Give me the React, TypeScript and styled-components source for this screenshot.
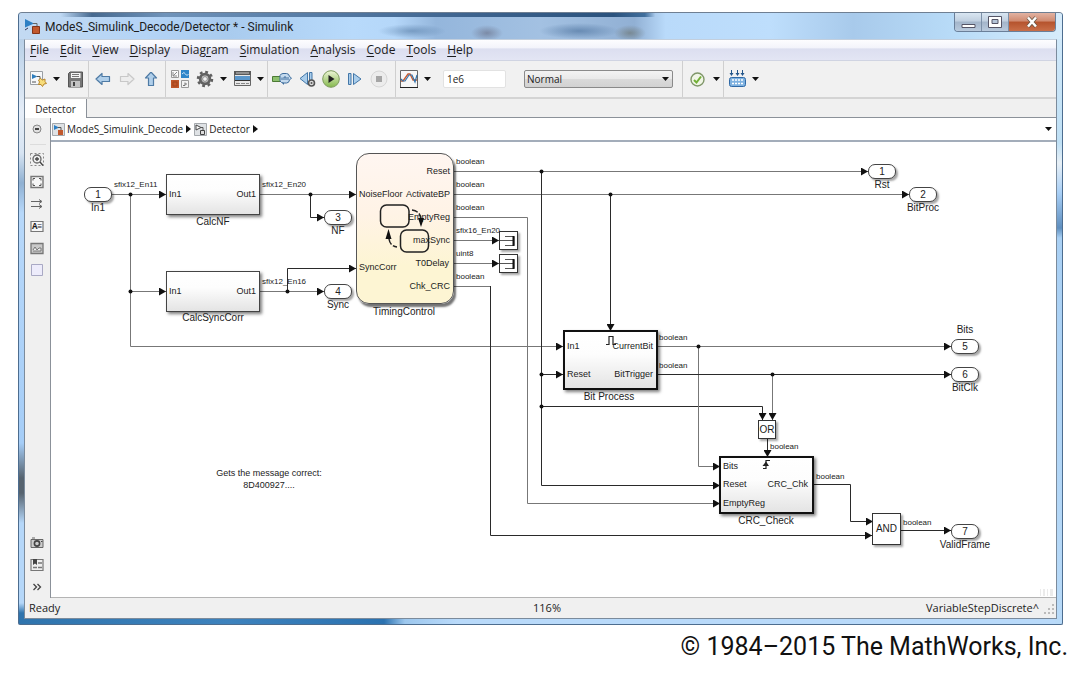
import React from "react";
import styled, { createGlobalStyle, css } from "styled-components";

const ui = `"Open Sans", "Noto Sans", sans-serif`;
const diagramFont = `"Liberation Sans", Arial, sans-serif`;

const GlobalStyle = createGlobalStyle`
  *, *::before, *::after { box-sizing: border-box; }
  body { margin: 0; background: #fff; color: #1c1c1c; font-family: ${ui}; font-size: 11px; }
  button, input, select { font: inherit; color: inherit; }
`;

/* ---------- window frame ---------- */

const Page = styled.div`
  padding: 12px 22px 12px 18px;
`;

const WindowFrame = styled.main`
  display: flex;
  flex-direction: column;
  padding: 0 6px 5px;
  border: 1px solid #4d6d8f;
  border-top-color: #6f7f92;
  border-radius: 4px 4px 2px 2px;
  background:
    linear-gradient(90deg, #2f74ad 0, #3d82bd 20%, #2b72b0 35%, rgba(150, 195, 235, 0.8) 37%, rgba(184, 217, 248, 0) 42%) 0 100% / 100% 6px no-repeat,
    linear-gradient(180deg, #a9c6e2 0, #e6eef8 100px, #d7e4f2 140px, #8fb0d2 170px, #b7d8fa 200px, #a5cdf7 430px, #56636f 465px, #56636f 480px, #b5d7f9 510px, #b5d7f9 590px, #2f74ad 600px) 0 0 / 7px 100% no-repeat,
    linear-gradient(180deg, #d5ebfb 0, #bfe0f5 130px, #e8f0f6 150px, #a8cff6 180px, #5f8fbf 215px, #a9d0f4 225px, #b8daf8 100%) 100% 0 / 7px 100% no-repeat,
    #b9dafa;
`;

const TitleBar = styled.header`
  display: flex;
  align-items: flex-start;
  height: 26px;
  margin: 0 -6px;
  padding-left: 6px;
  border-radius: 3px 3px 0 0;
  background:
    linear-gradient(90deg, rgba(46, 84, 128, 0) 4%, #46698f 7%, #6f93ba 14%, #5d82ab 24%, #3c628d 44%, #2a527d 57%, #416f9d 60%, rgba(46, 84, 128, 0) 61%) 0 0 / 100% 4px no-repeat,
    radial-gradient(ellipse 34px 7px at 393px 18px, rgba(80, 118, 160, 0.55), transparent),
    radial-gradient(ellipse 16px 8px at 468px 20px, rgba(92, 90, 110, 0.5), transparent),
    radial-gradient(ellipse 40px 8px at 560px 18px, rgba(70, 108, 152, 0.6), transparent),
    radial-gradient(ellipse 16px 8px at 611px 20px, rgba(110, 120, 120, 0.7), transparent),
    linear-gradient(90deg, #c3daf2 0, #b4d4f6 12%, #a9cbee 20%, #b8dafb 32%, #b5d7f9 36%, #94b6dc 40%, #a3c1e2 50%, #91b0d4 59%, #b9dafa 62%, #bedefc 72%, #a8caeb 80%, #b9dcf8 90%, #d7ecfb 100%);
`;

const Title = styled.h1`
  display: flex;
  align-items: center;
  gap: 4px;
  flex: 1;
  height: 27px;
  margin: 0;
  font-family: Roboto, sans-serif;
  font-size: 12px;
  font-weight: 400;
  line-height: 18px;
`;

const Caption = styled.div`
  display: flex;
  height: 19px;
  margin-right: 6px;
  border: 1px solid #6a7f99;
  border-top: 0;
  border-radius: 0 0 4px 4px;
  overflow: hidden;
`;

const CaptionButton = styled.button<{ $close?: boolean }>`
  display: grid;
  place-items: center;
  width: ${(p) => (p.$close ? 46 : 27)}px;
  padding: 0;
  border: 0;
  border-right: ${(p) => (p.$close ? 0 : 1)}px solid #7c90a8;
  background: ${(p) =>
    p.$close
      ? "linear-gradient(#e2b3a3 0, #d08a70 45%, #b5532d 50%, #c96f49 100%)"
      : "linear-gradient(#d9e6f2 0, #c0cfdf 45%, #a3b5ca 50%, #b9cadd 100%)"};
`;

const Client = styled.div`
  display: flex;
  flex-direction: column;
  border: 1px solid #7b8b9c;
  border-top-color: #c3cfdd;
  margin: 0 -1px;
  background: #f0f0f0;
`;

/* ---------- menu, toolbar ---------- */

const MenuBar = styled.nav`
  display: flex;
  align-items: center;
  gap: 11px;
  height: 21px;
  padding-left: 5px;
  border-bottom: 1px solid #d0d4e2;
  background: linear-gradient(#fdfdff 0, #f3f4fb 38%, #dcdff0 45%, #e3e5f4 100%);
`;

const MenuItem = styled.button`
  padding: 0;
  border: 0;
  background: none;
  font-size: 12px;
  line-height: 18px;
  u { text-underline-offset: 2px; }
`;

const ToolBar = styled.div`
  display: flex;
  height: 38px;
  border-bottom: 2px solid #d4d4d4;
  background: #f1f1f1;
`;

const Group = styled.div<{ $left?: number; $right?: number; $gap?: number; $last?: boolean }>`
  display: flex;
  align-items: center;
  gap: ${(p) => p.$gap ?? 6}px;
  padding: 0 ${(p) => p.$right ?? 4}px 0 ${(p) => p.$left ?? 4}px;
  border-right: ${(p) => (p.$last ? 0 : 1)}px solid #cfcfcf;
`;

const IconButton = styled.button<{ $w?: number; $h?: number }>`
  display: grid;
  place-items: center;
  flex: none;
  width: ${(p) => p.$w ?? 18}px;
  height: ${(p) => p.$h ?? 20}px;
  padding: 0;
  border: 0;
  background: none;
  svg { display: block; }
`;

const StopTime = styled.input`
  width: 63px;
  height: 18px;
  margin: 0 12px 0 6px;
  padding: 0 3px;
  border: 1px solid #e2e2e2;
  border-radius: 2px;
  background: #fff;
  font-size: 10px;
`;

const SelectWrap = styled.label`
  position: relative;
  display: block;
  svg { position: absolute; right: 4px; top: 7px; pointer-events: none; }
`;

const Mode = styled.select`
  appearance: none;
  display: block;
  width: 149px;
  height: 18px;
  padding: 0 2px;
  border: 1px solid #8a8a8a;
  border-radius: 2px;
  background: linear-gradient(#f3f3f3 0, #e9e9e9 48%, #dadada 52%, #d2d2d2 100%);
  font-size: 10px;
`;

const TabStrip = styled.div`
  display: flex;
  height: 19px;
  border-bottom: 1px solid #8b9199;
`;

const Tab = styled.button`
  width: 62px;
  height: 19px;
  padding: 0;
  border: 0;
  border-right: 1px solid #8b9199;
  background: #fff;
  font-size: 10px;
`;

/* ---------- body ---------- */

const Body = styled.div`
  display: flex;
`;

const SideBar = styled.aside`
  display: flex;
  flex-direction: column;
  flex: none;
  width: 25px;
`;

const SideRule = styled.hr`
  width: 16px;
  height: 1px;
  margin: 4px auto;
  border: 0;
  background: #dcdcdc;
`;

const Spacer = styled.div`
  flex: 1;
`;

const Editor = styled.section`
  display: flex;
  flex-direction: column;
  flex: 1;
  min-width: 0;
  border-left: 1px solid #8b9199;
`;

const PathBar = styled.div`
  display: flex;
  align-items: center;
  gap: 3px;
  height: 24px;
  padding: 0 4px 0 1px;
  border-bottom: 2px solid #a3adba;
  background: #fff;
`;

const Crumb = styled.a`
  display: flex;
  align-items: center;
  gap: 2px;
  color: inherit;
  text-decoration: none;
  font-size: 10px;
  line-height: 14px;
`;

const Canvas = styled.div`
  position: relative;
  height: 456px;
  overflow: hidden;
  background: #fff;
  border-bottom: 1px solid #b4b4b4;
  font-family: ${diagramFont};
`;

const Wires = styled.svg`
  position: absolute;
  left: 0;
  top: 0;
`;

const StatusBar = styled.footer`
  display: grid;
  grid-template-columns: 1fr auto 1fr;
  align-items: center;
  height: 20px;
  padding: 0 1px 0 4px;
  font-size: 11px;
  line-height: 16px;
`;

const Zoom = styled.span`
  padding-left: 10px;
`;

const Solver = styled.div`
  display: flex;
  align-items: center;
  justify-content: flex-end;
  gap: 5px;
`;

const Copyright = styled.p`
  margin: 8px -5px 0 0;
  color: #111;
  font-family: Roboto, sans-serif;
  font-size: 25px;
  line-height: 28px;
  text-align: right;
`;

/* ---------- diagram parts: model coordinates start at this origin ---------- */

const ORIGIN_X = 51;
const ORIGIN_Y = 142;

type Box = { $x: number; $y: number; $w: number; $h: number };

const place = css<Box>`
  position: absolute;
  left: ${(p) => p.$x - ORIGIN_X}px;
  top: ${(p) => p.$y - ORIGIN_Y}px;
  width: ${(p) => p.$w}px;
  height: ${(p) => p.$h}px;
`;

const Block = styled.div<Box & { $heavy?: boolean }>`
  ${place}
  border: ${(p) => (p.$heavy ? 2 : 1)}px solid ${(p) => (p.$heavy ? "#111" : "#444")};
  background: linear-gradient(#fff 0, #fdfdfd 40%, #e4e4e4 100%);
  box-shadow: 2px 2px 3px rgba(0, 0, 0, 0.5);
`;

const Chart = styled.div<Box>`
  ${place}
  border: 1px solid #555;
  border-radius: 13px;
  background: linear-gradient(#fff6f1 0, #fff3e6 40%, #fdf5d3 75%, #fdf5d3 100%);
  box-shadow: 2px 3px 2px rgba(0, 0, 0, 0.55);
`;

const Logic = styled.div<Box>`
  ${place}
  display: grid;
  place-items: center;
  border: 1px solid #333;
  background: #fff;
  box-shadow: 2px 2px 2px rgba(0, 0, 0, 0.35);
  font-size: 10px;
  line-height: 12px;
`;

const Terminal = styled(Logic)`
  border-radius: 7px;
  border-color: #444;
  color: #222;
`;

const Label = styled.span<{ $x: number; $y: number; $align?: "left" | "center" | "right"; $size?: number }>`
  position: absolute;
  top: ${(p) => p.$y - ORIGIN_Y - 6}px;
  left: ${(p) => p.$x - ORIGIN_X - (p.$align === "center" ? 80 : p.$align === "right" ? 160 : 0)}px;
  width: 160px;
  text-align: ${(p) => p.$align ?? "left"};
  font-size: ${(p) => p.$size ?? 8}px;
  line-height: 12px;
  white-space: pre-line;
  color: #222;
`;

const blocks = [
  { name: "CalcNF", x: 166, y: 174, w: 94, h: 41, label: [213, 222] },
  { name: "CalcSyncCorr", x: 166, y: 271, w: 94, h: 41, label: [213, 318] },
  { name: "Bit Process", x: 563, y: 330, w: 95, h: 60, label: [609, 397], heavy: true },
  { name: "CRC_Check", x: 719, y: 456, w: 95, h: 58, label: [766, 521], heavy: true },
];

const terminals = [
  { n: "1", name: "In1", x: 84, y: 187, label: [98, 208] },
  { n: "3", name: "NF", x: 324, y: 210, label: [338, 231] },
  { n: "4", name: "Sync", x: 324, y: 284, label: [338, 305] },
  { n: "1", name: "Rst", x: 868, y: 164, label: [882, 185] },
  { n: "2", name: "BitProc", x: 909, y: 187, label: [923, 208] },
  { n: "5", name: "Bits", x: 951, y: 339, label: [965, 330] },
  { n: "6", name: "BitClk", x: 951, y: 367, label: [965, 388] },
  { n: "7", name: "ValidFrame", x: 951, y: 524, label: [965, 545] },
];

const inputs: [string, number, number][] = [
  ["In1", 169, 194], ["In1", 169, 291], ["NoiseFloor", 359, 194], ["SyncCorr", 359, 267],
  ["In1", 567, 346], ["Reset", 567, 374], ["Bits", 723, 466], ["Reset", 723, 484], ["EmptyReg", 723, 503],
];

const outputs: [string, number, number][] = [
  ["Out1", 256, 194], ["Out1", 256, 291], ["Reset", 450, 171], ["ActivateBP", 450, 194],
  ["EmptyReg", 450, 217], ["maxSync", 450, 240], ["T0Delay", 449, 263], ["Chk_CRC", 450, 286],
  ["CurrentBit", 653, 346], ["BitTrigger", 653, 374], ["CRC_Chk", 808, 484],
];

const signals: [string, number, number][] = [
  ["sfix12_En11", 114, 185], ["sfix12_En20", 262, 185], ["sfix12_En16", 262, 282],
  ["boolean", 456, 162], ["boolean", 456, 185], ["boolean", 456, 208], ["sfix16_En20", 456, 231],
  ["uint8", 456, 254], ["boolean", 456, 277], ["boolean", 659, 338], ["boolean", 659, 366],
  ["boolean", 770, 447], ["boolean", 816, 477], ["boolean", 903, 523],
];

const wires: { d: string; dark?: boolean; arrow?: boolean }[] = [
  { d: "M112 194.500H166", arrow: true },
  { d: "M130.500 194V346.500H563", arrow: true },
  { d: "M130 291.500H166", arrow: true },
  { d: "M260 194.500H356", arrow: true },
  { d: "M310.500 194V217.500H324", dark: true, arrow: true },
  { d: "M260 291.500H324", arrow: true },
  { d: "M287.500 291V268.500H356", dark: true, arrow: true },
  { d: "M454 171.500H868", arrow: true },
  { d: "M454 194.500H909", arrow: true },
  { d: "M454 217.500H527.500V503.500H720", arrow: true },
  { d: "M454 240.500H499", arrow: true },
  { d: "M454 263.500H499", arrow: true },
  { d: "M454 286.500H490.500" },
  { d: "M490.500 286V535.500H872", dark: true, arrow: true },
  { d: "M541.500 171V485.500H720", dark: true, arrow: true },
  { d: "M541 374.500H563", dark: true, arrow: true },
  { d: "M541 406.500H762.500V420", dark: true, arrow: true },
  { d: "M610.500 194V331", dark: true, arrow: true },
  { d: "M658 346.500H951", arrow: true },
  { d: "M698.500 346V466.500H720", arrow: true },
  { d: "M658 374.500H951", dark: true, arrow: true },
  { d: "M772.500 374V420", arrow: true },
  { d: "M767.500 438V457", dark: true, arrow: true },
  { d: "M814 484.500H850.500V521.500H873", dark: true, arrow: true },
  { d: "M901 530.500H951", dark: true, arrow: true },
];

const junctions = [
  [130, 194], [130, 291], [310, 194], [287, 291], [541, 171], [610, 194],
  [541, 374], [541, 406], [698, 346], [772, 374],
];

function Diagram() {
  return (
    <Canvas>
      <Wires width="1005" height="456" viewBox="51 142 1005 456">
        <defs>
          <marker id="head" markerUnits="userSpaceOnUse" viewBox="0 0 7 8" refX="7" refY="4" markerWidth="7" markerHeight="8" orient="auto">
            <path d="M0 0L7 4L0 8Z" fill="#111" />
          </marker>
        </defs>
        {wires.map((w) => (
          <path key={w.d} d={w.d} fill="none" stroke={w.dark ? "#2a2a2a" : "#777"} markerEnd={w.arrow ? "url(#head)" : undefined} />
        ))}
        {junctions.map(([x, y]) => (
          <circle key={`${x}-${y}`} cx={x + 0.5} cy={y + 0.5} r="2" fill="#111" />
        ))}
        <path d="M1040 589h1v7h-1zM1043 589h2v7h-2zM1047 589h1v7h-1zM1050 589h3v7h-3z" fill="#ccc" opacity=".4" />
      </Wires>

      {blocks.map((b) => (
        <React.Fragment key={b.name}>
          <Block $x={b.x} $y={b.y} $w={b.w} $h={b.h} $heavy={b.heavy} />
          <Label $x={b.label[0]} $y={b.label[1]} $align="center" $size={10}>{b.name}</Label>
        </React.Fragment>
      ))}

      <Chart $x={356} $y={153} $w={98} $h={151} />
      <Label $x={404} $y={312} $align="center" $size={10}>TimingControl</Label>

      {terminals.map((t) => (
        <React.Fragment key={t.name}>
          <Terminal $x={t.x} $y={t.y} $w={28} $h={15}>{t.n}</Terminal>
          <Label $x={t.label[0]} $y={t.label[1]} $align="center" $size={10}>{t.name}</Label>
        </React.Fragment>
      ))}

      <Logic $x={758} $y={420} $w={18} $h={19}>OR</Logic>
      <Logic $x={872} $y={513} $w={29} $h={32}>AND</Logic>
      <Logic $x={499} $y={231} $w={19} $h={19} />
      <Logic $x={499} $y={254} $w={19} $h={19} />

      {inputs.map(([t, x, y]) => <Label key={`${t}${x}${y}`} $x={x} $y={y} $size={9}>{t}</Label>)}
      {outputs.map(([t, x, y]) => <Label key={`${t}${x}${y}`} $x={x} $y={y} $size={9} $align="right">{t}</Label>)}
      {signals.map(([t, x, y]) => <Label key={`${t}${x}${y}`} $x={x} $y={y}>{t}</Label>)}

      <Label $x={269} $y={473} $align="center" $size={9}>{"Gets the message correct:\n8D400927...."}</Label>

      <Wires width="1005" height="456" viewBox="51 142 1005 456" fill="none">
        <g stroke="#222" strokeWidth="1.500">
          <rect x="380.500" y="205" width="28.500" height="22" rx="6" />
          <rect x="400.500" y="230" width="28" height="22" rx="6" />
          <path d="M412 210q8 1 9 9M389 239q1 7 8 8" strokeDasharray="6 2" />
        </g>
        <path d="M418 218h6l-3 9zM385.500 239h6l-3-10z" fill="#111" />
        <path d="M505 236.500h9v9h-9M500 240.500h14M505 259.500h9v9h-9M500 263.500h14" stroke="#555" />
        <path d="M513.500 236v10M513.500 259v10" stroke="#111" strokeWidth="2" />
        <path d="M606 344.500h3v-8h4v8h3" stroke="#222" strokeWidth="1.200" />
        <path d="M763 468.500h3v-8h4" stroke="#222" strokeWidth="1.200" />
        <path d="M762.500 466l3.500-4.500 3 4.500z" fill="#222" />
      </Wires>
    </Canvas>
  );
}

/* ---------- icons ---------- */

const Caret = () => (
  <svg width="7" height="4" viewBox="0 0 7 4" aria-hidden="true"><path d="M0 0h7L3.500 4z" fill="#111" /></svg>
);
const Chevron = () => (
  <svg width="5" height="8" viewBox="0 0 5 8" aria-hidden="true"><path d="M0 0l5 4-5 4z" fill="#111" /></svg>
);
const DropDown = ({ label }: { label: string }) => (
  <IconButton $w={7} aria-label={label}><Caret /></IconButton>
);

const AppIcon = () => (
  <svg width="16" height="16" viewBox="0 0 16 16">
    <path d="M0 0l9 4.500-9 4z" fill="#2c7fc4" /><path d="M8 4.500h4v3" stroke="#666" fill="none" />
    <path d="M7.500 7.500h7v7h-7z" fill="#c2592e" stroke="#84351a" /><path d="M0 11l3-2" stroke="#335" />
  </svg>
);
const ModelIcon = ({ grey }: { grey?: boolean }) => (
  <svg width="13" height="13" viewBox="0 0 13 13">
    <path d="M.5.500h12v12H.5z" fill="#dfe2e5" stroke="#a5a9ad" />
    <path d="M2 2l5 2.500L2 7z" fill={grey ? "#fff" : "#2c7fc4"} stroke={grey ? "#444" : "none"} /><path d="M6 4.500h3V7" stroke="#555" fill="none" />
    <path d={grey ? "M6.500 7.500h4v4h-4z" : "M6 7h5v5H6z"} fill={grey ? "#ddd" : "#c2592e"} stroke={grey ? "#444" : "none"} />
  </svg>
);
const NewIcon = () => (
  <svg width="18" height="18" viewBox="0 0 18 18">
    <path d="M1.500 1.500h12v13h-12z" fill="#f6f8fa" stroke="#9a9fa4" /><path d="M3 4l5.500 2.500L3 9z" fill="#2d7dbd" />
    <path d="M8 6.500h3v3M3 12h4" stroke="#555" fill="none" />
    <path d="M11.500 8.500l2 1.500 2.500-1 0 2.500 1.500 2-2.500.5-1.500 2.500-1.500-2-2.500 0 1-2.500-1-2z" fill="#f7dd7a" stroke="#b8862c" />
  </svg>
);
const SaveIcon = () => (
  <svg width="15" height="17" viewBox="0 0 15 17">
    <path d="M.5 2.500l1.500-1.500h12.500v15H.5z" fill="#777" stroke="#555" /><path d="M3 2h9.500v5H3z" fill="#f4f4f4" />
    <path d="M4 3.500h7M4 5.500h7" stroke="#777" /><path d="M3 10h9v6H3z" fill="#c4c4c4" /><path d="M5 11h2v4H5z" fill="#444" />
  </svg>
);
const Arrow = ({ turn = 0, faint }: { turn?: number; faint?: boolean }) => (
  <svg width="16" height="14" viewBox="0 0 16 14">
    <path transform={`rotate(${turn} 8 7)`} d="M1 7l6-5.500v3h7.500v5H7v3z" fill={faint ? "#ededed" : "#b0cfea"} stroke={faint ? "#c8c8c8" : "#4f7ba5"} strokeWidth="1.200" strokeLinejoin="round" />
  </svg>
);
const LibraryIcon = () => (
  <svg width="20" height="18" viewBox="0 0 20 18">
    <path d="M1.500.500h7v7h-7z" fill="#fafafa" stroke="#999" /><path d="M3 6l4-4M3 2v4h4" stroke="#888" fill="none" />
    <path d="M11 0h8v8h-8z" fill="#2f86c9" /><path d="M12 4q2-3 3.500 0t3 0" stroke="#cfe6f8" fill="none" />
    <path d="M1 10h8v8H1z" fill="#bf562a" /><path d="M3 12h4v4H3z" fill="none" stroke="#a2441d" />
    <path d="M11.500 10.500h7v7h-7z" fill="#f4f4f4" stroke="#999" /><path d="M13 15.500h2v-3M15 14h2" stroke="#777" fill="none" />
  </svg>
);
const GearIcon = () => (
  <svg width="18" height="18" viewBox="0 0 18 18">
    <circle cx="9" cy="9" r="7" fill="none" stroke="#5f5f5f" strokeWidth="2.500" strokeDasharray="2.750 2.750" />
    <circle cx="9" cy="9" r="4.800" fill="#d0d0d0" stroke="#626262" strokeWidth="2.800" />
    <circle cx="9" cy="9" r="2.400" fill="#f1f1f1" stroke="#8a8a8a" />
  </svg>
);
const ExplorerIcon = () => (
  <svg width="17" height="16" viewBox="0 0 17 16">
    <path d="M.5.500h16v14H.5z" fill="#e8e8e8" stroke="#666" /><path d="M0 0h17v4H0z" fill="#5a5a5a" />
    <path d="M1 5h15v4H1z" fill="#5b97cb" /><path d="M1 9.500h15" stroke="#333" /><path d="M2 12.500h13" stroke="#888" strokeDasharray="4 1" />
    <path d="M2 2h13" stroke="#c9c9c9" />
  </svg>
);
const UpdateIcon = () => (
  <svg width="20" height="14" viewBox="0 0 20 14">
    <path d="M.5 4.500h8v5h-8z" fill="#8cc06d" stroke="#4c7a35" />
    <path d="M8 3.500q1-2 3-2h3.500q2.500 0 3 3l2 1.500-2 2q-.5 3-3 3H12q-3 0-4-2z" fill="#c4daee" stroke="#3d6c9c" />
    <path d="M10 8V5.500M12 8V5h2v3M16 8V5" stroke="#3d6c9c" fill="none" /><path d="M12 11v2l-2-2" fill="#3d6c9c" />
  </svg>
);
const StepBackIcon = () => (
  <svg width="17" height="18" viewBox="0 0 17 18">
    <path d="M8.500 2.500v12L1 8.500z" fill="#a9cdeb" stroke="#4377a8" /><path d="M10.500 2.500h2.500v8h-2.500z" fill="#a9cdeb" stroke="#4377a8" />
    <circle cx="12.500" cy="13" r="3" fill="#ddd" stroke="#555" strokeWidth="1.600" /><circle cx="12.500" cy="13" r="1" fill="#555" />
  </svg>
);
const RunIcon = () => (
  <svg width="18" height="18" viewBox="0 0 18 18">
    <defs><linearGradient id="run" x2="0" y2="1"><stop stopColor="#eef6d8" /><stop offset="1" stopColor="#84b84c" /></linearGradient></defs>
    <circle cx="9" cy="9" r="8.300" fill="url(#run)" stroke="#7d9b5c" /><path d="M6.500 5L12.500 9l-6 4z" fill="#222" />
  </svg>
);
const StepIcon = () => (
  <svg width="14" height="14" viewBox="0 0 14 14">
    <path d="M.5 1.500H3v11H.5zM5.500 1.500v11l7.500-5.500z" fill="#a9cdeb" stroke="#4377a8" />
  </svg>
);
const StopIcon = () => (
  <svg width="18" height="18" viewBox="0 0 18 18">
    <circle cx="9" cy="9" r="8" fill="#ececec" stroke="#d6d6d6" /><path d="M6 6h6v6H6z" fill="#a5a5a5" />
  </svg>
);
const ScopeIcon = () => (
  <svg width="18" height="18" viewBox="0 0 18 18">
    <path d="M.5.500h17v17H.5z" fill="#f7f7f7" stroke="#666" />
    <path d="M1 11h2l5-7h2l3 6h4" stroke="#c9582c" strokeWidth="1.300" fill="none" /><path d="M1 9l2 2h2l4-6h3l3 7 2-7" stroke="#3273ab" strokeWidth="1.200" fill="none" />
    <path d="M0 17.500h18" stroke="#222" />
  </svg>
);
const CheckIcon = () => (
  <svg width="15" height="15" viewBox="0 0 15 15">
    <circle cx="7.500" cy="7.500" r="6.500" fill="#f0f5e6" stroke="#7f9669" strokeWidth="1.400" />
    <path d="M4 8l2.500 2.500L11 4.500" stroke="#72b037" strokeWidth="2" fill="none" />
  </svg>
);
const BuildIcon = () => (
  <svg width="17" height="18" viewBox="0 0 17 18">
    <path d="M2.500 0v5M8.500 0v5M13.500 0v5" stroke="#24568a" />
    <path d="M.5 3h4l-2 3zM6.500 3h4l-2 3zM11.500 3h4l-2 3z" fill="#24568a" />
    <rect x=".5" y="7.500" width="16" height="9" rx="2" fill="#7fb2e0" stroke="#2f69a6" />
    <path d="M3 10h12M3 13.500h12" stroke="#fff" strokeWidth="1.600" strokeDasharray="2 1" />
  </svg>
);

const side: Record<string, React.ReactNode> = {
  hide: <><circle cx="7" cy="7" r="4" fill="#e0e0e0" stroke="#888" /><path d="M5 6h4v2H5z" fill="#444" /></>,
  zoom: <><path d="M.5.500h13v12H.5z" fill="none" stroke="#888" strokeDasharray="2 2" /><circle cx="7" cy="6" r="4" fill="#eee" stroke="#666" strokeWidth="1.300" /><path d="M5 6h4M7 4v4M10 9l3 3.500" stroke="#444" strokeWidth="1.300" /></>,
  fit: <><path d="M1 1.500h12v11H1z" fill="#f6f6f6" stroke="#777" strokeWidth="1.400" /><path d="M3 5.500V3.500h2M9 3.500h2v2M3 8.500v2h2M9 10.500h2v-2" stroke="#555" fill="none" /></>,
  swap: <path d="M1 4.500h10M1 9.500h11M9 2.500l3 2-3 2M9 7.500l3 2-3 2" stroke="#666" fill="none" />,
  image: <><path d="M1 2.500h12v10H1z" fill="#c9c9c9" stroke="#777" strokeWidth="1.300" /><path d="M3 9l2-3 2 3 2-2h2v3H3" stroke="#777" fill="#eee" /></>,
  note: <path d="M1 2.500h12v10H1z" fill="#f7f7f7" stroke="#777" strokeWidth="1.200" />,
  area: <path d="M1.500 1.500h11v11h-11z" fill="#edecfb" stroke="#a9a9c4" />,
  camera: <><path d="M1 3.500h12v8H1z" fill="#ccc" stroke="#666" /><path d="M2 2h3" stroke="#666" /><circle cx="7" cy="7.500" r="2.600" fill="#ccc" stroke="#444" strokeWidth="1.600" /><path d="M11 5.500h1.500" stroke="#444" /></>,
  marks: <><path d="M1 1.500h12v11H1z" fill="#eee" stroke="#777" strokeWidth="1.200" /><path d="M3 1h4v6L5 5.500 3 7z" fill="#444" /><path d="M8 5h4M3 9.500h4M8 9.500h4" stroke="#777" strokeWidth="1.500" /></>,
  more: <path d="M3.500 4l3 3-3 3M7.500 4l3 3-3 3" stroke="#444" strokeWidth="1.300" fill="none" />,
};

const NoteText = styled.span`
  grid-area: 1 / 1;
  font-size: 8px;
  line-height: 10px;
  font-weight: 700;
`;

const SideIcon = styled.svg`
  grid-area: 1 / 1;
`;

const SideTool = ({ name, text }: { name: string; text?: string }) => (
  <IconButton $w={24} $h={22} aria-label={name}>
    <SideIcon width="14" height="14" viewBox="0 0 14 14">{side[name]}</SideIcon>
    {text && <NoteText>{text}</NoteText>}
  </IconButton>
);

const menus: [string, string, string][] = [
  ["", "F", "ile"], ["", "E", "dit"], ["", "V", "iew"], ["", "D", "isplay"], ["Diag", "r", "am"],
  ["", "S", "imulation"], ["", "A", "nalysis"], ["", "C", "ode"], ["", "T", "ools"], ["", "H", "elp"],
];

export default function App() {
  return (
    <>
      <GlobalStyle />
      <Page>
        <WindowFrame>
          <TitleBar>
            <Title><AppIcon />ModeS_Simulink_Decode/Detector * - Simulink</Title>
            <Caption>
              <CaptionButton aria-label="Minimize">
                <svg width="15" height="14" viewBox="0 0 15 14"><path d="M1 9.500h13v3H1z" fill="#fff" stroke="#556" /></svg>
              </CaptionButton>
              <CaptionButton aria-label="Maximize">
                <svg width="14" height="12" viewBox="0 0 14 12"><path d="M.5.500h13v11H.5z" fill="#fff" stroke="#556" /><path d="M4 3.500h6v4H4z" fill="#b5c5d8" stroke="#556" /></svg>
              </CaptionButton>
              <CaptionButton $close aria-label="Close">
                <svg width="12" height="12" viewBox="0 0 12 12"><path d="M2 1.500l8 9M10 1.500l-8 9" stroke="#654" strokeWidth="4" /><path d="M2 1.500l8 9M10 1.500l-8 9" stroke="#fff" strokeWidth="2.500" /></svg>
              </CaptionButton>
            </Caption>
          </TitleBar>

          <Client>
            <MenuBar>
              {menus.map(([a, b, c]) => <MenuItem key={b + c}>{a}<u>{b}</u>{c}</MenuItem>)}
            </MenuBar>

            <ToolBar>
              <Group>
                <IconButton aria-label="New"><NewIcon /></IconButton>
                <DropDown label="New options" />
                <IconButton aria-label="Save"><SaveIcon /></IconButton>
              </Group>
              <Group $left={5} $right={5}>
                <IconButton aria-label="Back"><Arrow /></IconButton>
                <IconButton aria-label="Forward"><Arrow turn={180} faint /></IconButton>
                <IconButton aria-label="Up"><Arrow turn={90} /></IconButton>
              </Group>
              <Group $right={3}>
                <IconButton $w={20} aria-label="Library browser"><LibraryIcon /></IconButton>
                <IconButton aria-label="Configuration"><GearIcon /></IconButton>
                <DropDown label="Configuration options" />
                <IconButton aria-label="Model explorer"><ExplorerIcon /></IconButton>
                <DropDown label="Explorer options" />
              </Group>
              <Group $right={7}>
                <IconButton $w={20} aria-label="Fast restart"><UpdateIcon /></IconButton>
                <IconButton aria-label="Step back"><StepBackIcon /></IconButton>
                <IconButton aria-label="Run"><RunIcon /></IconButton>
                <IconButton aria-label="Step forward"><StepIcon /></IconButton>
                <IconButton aria-label="Stop"><StopIcon /></IconButton>
              </Group>
              <Group $right={9}>
                <IconButton aria-label="Data inspector"><ScopeIcon /></IconButton>
                <DropDown label="Inspector options" />
                <StopTime aria-label="Stop time" defaultValue="1e6" />
                <SelectWrap>
                  <Mode aria-label="Simulation mode" defaultValue="Normal"><option>Normal</option></Mode>
                  <Caret />
                </SelectWrap>
              </Group>
              <Group $left={5} $right={3} $gap={7}>
                <IconButton aria-label="Advisor"><CheckIcon /></IconButton>
                <DropDown label="Advisor options" />
              </Group>
              <Group $left={4} $last>
                <IconButton aria-label="Build"><BuildIcon /></IconButton>
                <DropDown label="Build options" />
              </Group>
            </ToolBar>

            <TabStrip><Tab>Detector</Tab></TabStrip>

            <Body>
              <SideBar>
                <SideTool name="hide" />
                <SideRule />
                <SideTool name="zoom" />
                <SideTool name="fit" />
                <SideTool name="swap" />
                <SideTool name="note" text="A≡" />
                <SideTool name="image" />
                <SideTool name="area" />
                <Spacer />
                <SideTool name="camera" />
                <SideTool name="marks" />
                <SideTool name="more" />
              </SideBar>
              <Editor>
                <PathBar>
                  <Crumb href="#model"><ModelIcon />ModeS_Simulink_Decode</Crumb>
                  <Chevron />
                  <Crumb href="#detector"><ModelIcon grey />Detector</Crumb>
                  <Chevron />
                  <Spacer />
                  <DropDown label="Path history" />
                </PathBar>
                <Diagram />
              </Editor>
            </Body>

            <StatusBar>
              <span>Ready</span>
              <Zoom>116%</Zoom>
              <Solver>
                VariableStepDiscrete^
                <svg width="11" height="13" viewBox="0 0 11 13"><path d="M8 2h2v2H8zM8 6h2v2H8zM4 6h2v2H4zM8 10h2v2H8zM4 10h2v2H4zM0 10h2v2H0z" fill="#bbb" /></svg>
              </Solver>
            </StatusBar>
          </Client>
        </WindowFrame>
        <Copyright>© 1984–2015 The MathWorks, Inc.</Copyright>
      </Page>
    </>
  );
}
